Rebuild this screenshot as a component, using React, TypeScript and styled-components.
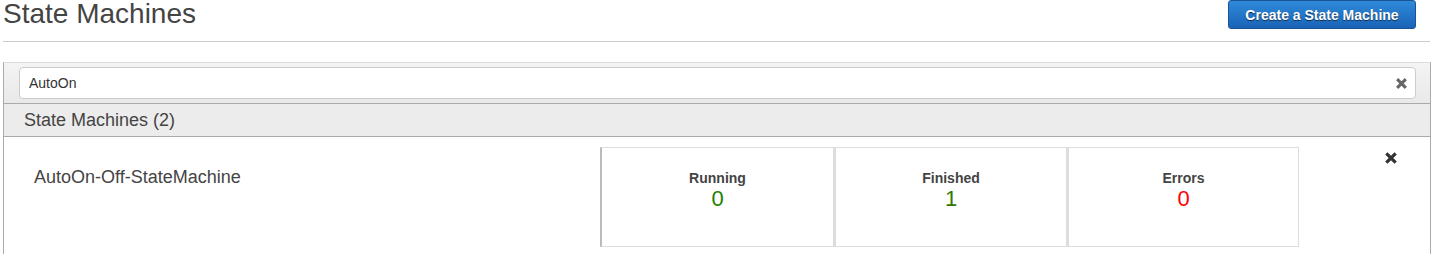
import React from 'react';
import styled, {createGlobalStyle} from 'styled-components';

const GlobalStyle = createGlobalStyle`
  html, body {
    margin: 0;
    padding: 0;
    background: #fff;
    font-family: "Liberation Sans", Arial, sans-serif;
    color: #444;
    overflow: hidden;
  }
`

const Page = styled.div`
  padding-left: 3px;
  width: 1431px;
  box-sizing: border-box;
`

const TopBar = styled.div`
  display: flex;
  align-items: flex-start;
  justify-content: space-between;
  height: 41px;
  border-bottom: 1px solid #ccc;
  margin-right: 1px;
`

const Title = styled.h1`
  margin: 0;
  font-size: 28px;
  font-weight: normal;
  line-height: 28px;
  color: #444;
`

const CreateButton = styled.button`
  width: 188px;
  height: 29px;
  margin-right: 14px;
  border: 1px solid #1b5496;
  border-radius: 3px;
  background: linear-gradient(#2f8ad9, #1a63b7);
  color: #fff;
  font-family: "Liberation Sans", Arial, sans-serif;
  font-size: 14px;
  font-weight: bold;
  text-shadow: 0 1px 1px rgba(0, 0, 0, 0.6);
  padding: 0;
  cursor: pointer;
`

const Panel = styled.div`
  margin-top: 20px;
  border-top: 1px solid #ddd;
  border-right: 1px solid #aaa;
  border-left: 1px solid #aaa;
`

const SearchArea = styled.div`
  background: linear-gradient(#f4f4f4, #e9e9e9);
  padding: 4px 14px 4px 15px;
`

const SearchBox = styled.div`
  display: flex;
  align-items: center;
  height: 32px;
  box-sizing: border-box;
  background: #fff;
  border: 1px solid #ccc;
  border-radius: 4px;
  padding: 0 7px 0 9px;
`

const SearchInput = styled.input`
  flex: 1;
  border: none;
  outline: none;
  font-family: "Liberation Sans", Arial, sans-serif;
  font-size: 14px;
  color: #333;
  padding: 0;
  background: transparent;
`

const CloseIcon = styled.span<{ tone: string }>`
  display: inline-flex;
  color: ${(props) => props.tone};
  cursor: pointer;
`

const SectionHeader = styled.div`
  height: 34px;
  box-sizing: border-box;
  border-top: 1px solid #aaa;
  border-bottom: 1px solid #aaa;
  background: #ececec;
  padding-left: 20px;
  font-size: 18px;
  line-height: 32px;
  color: #444;
`

const Row = styled.div`
  display: grid;
  grid-template-columns: 596px 699px 1fr;
  padding-top: 10px;
  height: 120px;
  box-sizing: border-box;
`

const Name = styled.div`
  padding-left: 30px;
  padding-top: 20px;
  font-size: 18px;
  line-height: 20px;
  color: #444;
`

const Stats = styled.div`
  display: grid;
  grid-template-columns: 234px 233px 232px;
  height: 100px;
`

const StatBox = styled.div<{ first?: boolean }>`
  display: flex;
  flex-direction: column;
  align-items: center;
  padding-top: 22px;
  box-sizing: border-box;
  border: 1px solid #ddd;
  border-left: 2px solid ${(props) => props.first ? '#bbb' : '#ddd'};
`

const StatLabel = styled.div`
  font-size: 14px;
  font-weight: bold;
  color: #444;
  line-height: 16px;
`

const StatValue = styled.div<{ color: string }>`
  font-size: 22px;
  line-height: 26px;
  color: ${(props) => props.color};
`

const RowActions = styled.div`
  display: flex;
  justify-content: flex-end;
  padding-right: 32px;
  padding-top: 4px;
`

const XMark = ({size}: { size: number }) => (
    <svg width={size} height={size} viewBox="0 0 12 12">
        <path d="M2 2 L10 10 M10 2 L2 10" stroke="currentColor" strokeWidth="2.8" strokeLinecap="butt"/>
    </svg>
)

const stats = [
    {label: 'Running', value: 0, color: '#1e8000'},
    {label: 'Finished', value: 1, color: '#2f7a00'},
    {label: 'Errors', value: 0, color: '#ff0000'},
]

const App: React.FC = () => {
    return <Page>
        <GlobalStyle/>
        <TopBar>
            <Title>State Machines</Title>
            <CreateButton>Create a State Machine</CreateButton>
        </TopBar>
        <Panel>
            <SearchArea>
                <SearchBox>
                    <SearchInput defaultValue="AutoOn"/>
                    <CloseIcon tone="#666"><XMark size={13}/></CloseIcon>
                </SearchBox>
            </SearchArea>
            <SectionHeader>State Machines (2)</SectionHeader>
            <Row>
                <Name>AutoOn-Off-StateMachine</Name>
                <Stats>
                    {stats.map((s, index) => (
                        <StatBox key={s.label} first={index === 0}>
                            <StatLabel>{s.label}</StatLabel>
                            <StatValue color={s.color}>{s.value}</StatValue>
                        </StatBox>
                    ))}
                </Stats>
                <RowActions>
                    <CloseIcon tone="#333"><XMark size={14}/></CloseIcon>
                </RowActions>
            </Row>
        </Panel>
    </Page>
}

export default App
